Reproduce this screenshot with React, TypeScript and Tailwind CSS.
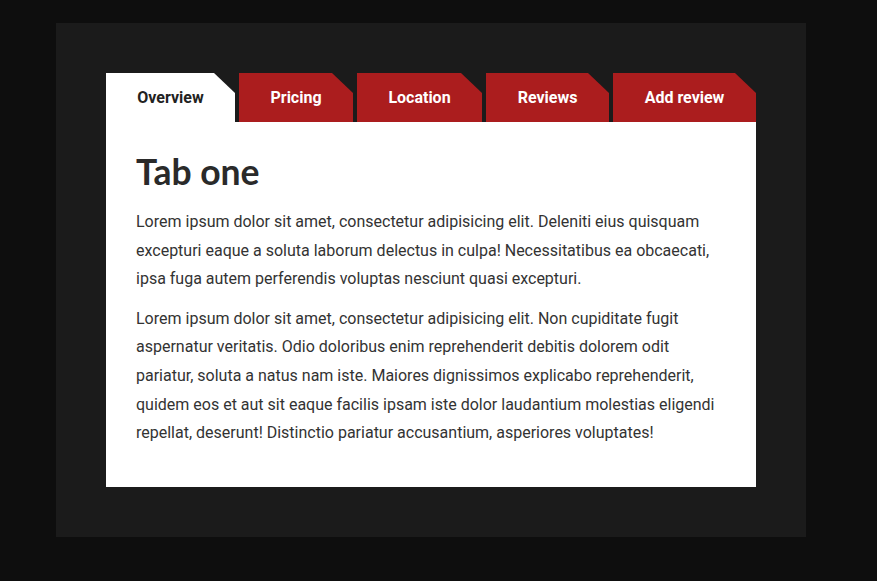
const tabs = [
  { label: "Overview", width: "w-[129px]", active: true },
  { label: "Pricing", width: "w-[114px]", active: false },
  { label: "Location", width: "w-[125px]", active: false },
  { label: "Reviews", width: "w-[123px]", active: false },
  { label: "Add review", width: "w-[143px]", active: false },
];

export default function App() {
  return (
    <div className="min-h-[581px] bg-[#0e0e0e] px-[56px] pt-[23px] pb-[44px] font-['Roboto',sans-serif]">
      <div className="w-[750px] bg-[#1b1b1b] px-[50px] py-[50px]">
        {/* tabs */}
        <div className="flex gap-[4px]">
          {tabs.map((tab) => (
            <div
              key={tab.label}
              className={`${tab.width} flex h-[49px] items-center justify-center text-[16px] font-bold [clip-path:polygon(0_0,calc(100%-21px)_0,100%_20px,100%_100%,0_100%)] ${
                tab.active ? "bg-white text-[#222]" : "bg-[#ab1d1e] text-white"
              }`}
            >
              {tab.label}
            </div>
          ))}
        </div>

        {/* panel */}
        <div className="bg-white px-[30px] pt-[28px] pb-[39px] text-[16px] leading-[28.6px] text-[#333]">
          <h2 className="mb-[14px] font-['Lato',sans-serif] text-[35.5px] leading-[44px] font-bold text-[#2a2a2a]">
            Tab one
          </h2>
          <p className="mb-[11px]">
            Lorem ipsum dolor sit amet, consectetur adipisicing elit. Deleniti eius quisquam
            excepturi eaque a soluta laborum delectus in culpa! Necessitatibus ea obcaecati,
            ipsa fuga autem perferendis voluptas nesciunt quasi excepturi.
          </p>
          <p>
            Lorem ipsum dolor sit amet, consectetur adipisicing elit. Non cupiditate fugit
            aspernatur veritatis. Odio doloribus enim reprehenderit debitis dolorem odit
            pariatur, soluta a natus nam iste. Maiores dignissimos explicabo reprehenderit,
            quidem eos et aut sit eaque facilis ipsam iste dolor laudantium molestias eligendi
            repellat, deserunt! Distinctio pariatur accusantium, asperiores voluptates!
          </p>
        </div>
      </div>
    </div>
  );
}
